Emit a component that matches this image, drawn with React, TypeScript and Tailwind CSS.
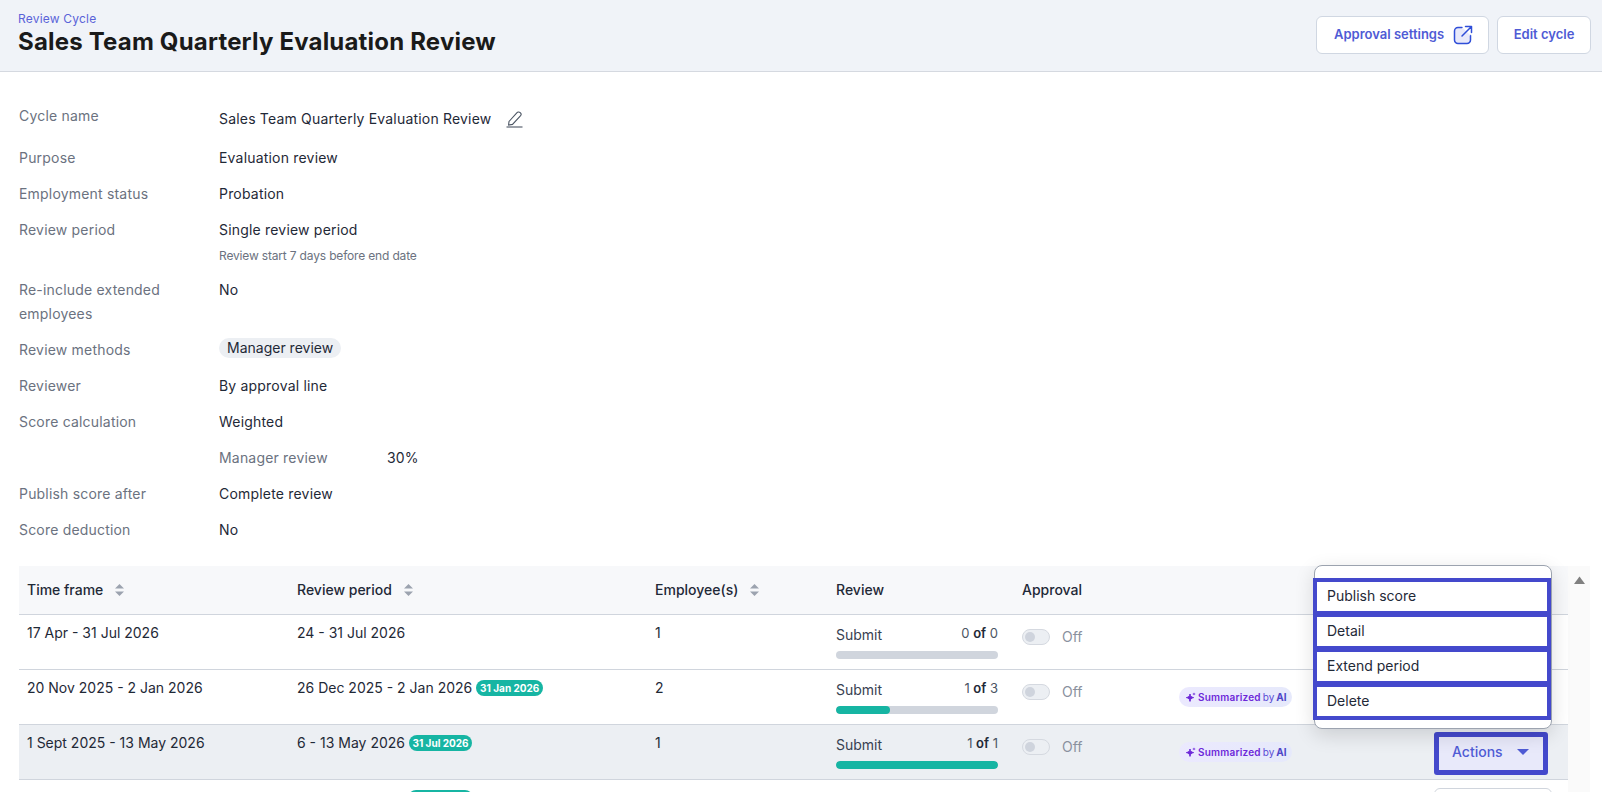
import React from "react";

const Sort = () => (
  <svg width="9" height="12" viewBox="0 0 9 12" className="ml-3 shrink-0">
    <path d="M4.5 0L9 4.5H0Z M4.5 12L0 7.5H9Z" fill="#9ca3af" />
  </svg>
);

const Sparkle = () => (
  <svg width="10" height="10" viewBox="0 0 10 10" className="shrink-0">
    <path d="M4 2C4.4 4.3 5.2 5.1 7.6 5.6C5.2 6.1 4.4 6.9 4 9.4C3.6 6.9 2.8 6.1 0.4 5.6C2.8 5.1 3.6 4.3 4 2Z" fill="#6d28d9" stroke="#6d28d9" strokeWidth="1" strokeLinejoin="round" />
    <path d="M8 0.2C8.2 1.3 8.6 1.7 9.8 1.9C8.6 2.1 8.2 2.5 8 3.6C7.8 2.5 7.4 2.1 6.2 1.9C7.4 1.7 7.8 1.3 8 0.2Z" fill="#6d28d9" />
  </svg>
);

const AiPill = () => (
  <div className="mt-[17px] h-5 w-[113px] flex items-center pl-[7px] gap-[2px] rounded-full bg-gradient-to-r from-[#ebe9fe] to-[#e6e9fb] text-[10px] leading-none whitespace-nowrap">
    <Sparkle />
    <span className="font-semibold tracking-[0.2px] text-[#6d28d9]">Summarized</span>
    <span className="text-[#5b4bd6]">by</span>
    <span className="font-bold text-[#4f46c8]">AI</span>
  </div>
);

const Badge = ({ children, w }: { children?: React.ReactNode; w: string }) => (
  <span className={`inline-flex h-4 items-center justify-center rounded-full bg-[#16b5a3] text-[10px] font-bold leading-none text-white ${w}`}>
    {children}
  </span>
);

const Toggle = () => (
  <div className="mt-3 flex items-center">
    <div className="h-4 w-7 rounded-full border border-[#d5d9e0] bg-[#eceff3] flex items-center pl-[2px]">
      <div className="h-[10px] w-[10px] rounded-full bg-[#cfd4dd]" />
    </div>
    <span className="ml-3 text-sm leading-5 text-[#8a919e]">Off</span>
  </div>
);

const Review = ({ a, b, pct }: { a: number; b: number; pct: number }) => (
  <div className="w-[162px] pt-[10px]">
    <div className="flex justify-between h-5 leading-5">
      <span className="text-sm text-[#374151]">Submit</span>
      <span className="text-[13px] leading-[17px] text-[#4b5563]">
        {a} <span className="font-semibold text-[#1f2937]">of</span> {b}
      </span>
    </div>
    <div className="mt-[6px] h-2 w-full overflow-hidden rounded-full bg-[#d0d5dd]">
      <div className="h-full rounded-full bg-[#16b5a3]" style={{ width: `${pct}%` }} />
    </div>
  </div>
);

const rowGrid = "grid grid-cols-[270px_358px_181px_186px_157px_1fr] h-[55px] border-b border-[#d0d5dd] text-sm text-[#1f2937]";

const Row = ({
  frame,
  period,
  badge,
  badgeW,
  emp,
  a,
  b,
  pct,
  ai,
  active,
}: {
  frame: string;
  period: string;
  badge?: string;
  badgeW?: string;
  emp: string;
  a: number;
  b: number;
  pct: number;
  ai?: boolean;
  active?: boolean;
}) => (
  <div className={`${rowGrid} ${active ? "bg-[#eceff3]" : "bg-white"}`}>
    <div className="pl-2 pt-2 leading-5">{frame}</div>
    <div className="pl-2 pt-2 leading-5 flex items-start gap-1">
      <span>{period}</span>
      {badge && <span className="mt-[2px] flex"><Badge w={badgeW ?? ""}>{badge}</Badge></span>}
    </div>
    <div className="pl-2 pt-2 leading-5">{emp}</div>
    <div className="pl-2"><Review a={a} b={b} pct={pct} /></div>
    <div className="pl-2"><Toggle /></div>
    <div className="pl-2 flex justify-between">
      {ai ? <AiPill /> : <span />}
      {active && (
        <button className="mt-[7px] mr-5 h-[43px] w-[114px] rounded-[3px] border-[5px] border-[#4449cc] bg-[#e8e9fa] flex items-center pl-[13px] pb-[3px] text-sm font-medium text-[#4f5bd5]">
          Actions
          <svg width="12" height="6" viewBox="0 0 12 6" className="ml-[14px]">
            <path d="M0 0H12L6 6Z" fill="#4f5bd5" />
          </svg>
        </button>
      )}
    </div>
  </div>
);

const Info = ({ label, children }: { label: string; children: React.ReactNode }) => (
  <div className="flex mb-3 text-sm leading-6 tracking-[0.19px]">
    <div className="w-[200px] pr-10 shrink-0 text-[#6b7280]">{label}</div>
    <div className="text-[#1f2937]">{children}</div>
  </div>
);

const menu = ["Publish score", "Detail", "Extend period", "Delete"];

export default function App() {
  return (
    <div className="h-[792px] overflow-hidden bg-white font-[Inter,sans-serif]">
      <header className="h-[72px] border-b border-[#d5d9e0] bg-[#f0f3f8] flex justify-between pl-[18px] pr-[11px]">
        <div>
          <div className="mt-[11px] text-xs leading-4 tracking-[0.2px] text-[#5a63d8]">Review Cycle</div>
          <h1 className="-mt-px text-2xl leading-8 font-bold tracking-[0.19px] text-[#1a1a1a]">Sales Team Quarterly Evaluation Review</h1>
        </div>
        <div className="flex gap-2 pt-4">
          <button className="h-[38px] w-[173px] rounded-md border border-[#d0d7e2] bg-white flex items-center pl-[17px] pb-px text-[13px] font-semibold text-[#4f5bd5]">
            Approval settings
            <svg width="20" height="20" viewBox="0 0 20 20" fill="none" className="ml-[9px]">
              <path d="M9 2.5H5A3.5 3.5 0 0 0 1.5 6V15A3.5 3.5 0 0 0 5 18.5H14A3.5 3.5 0 0 0 17.5 15V10.5" fill="#e8e9fa" stroke="#2f4ed8" strokeWidth="1.5" strokeLinecap="round" />
              <path d="M9 2.5V10.5H17.5Z" fill="#e8e9fa" />
              <path d="M9 11L18 2M12.5 1.5H18.5V7.5" stroke="#2f4ed8" strokeWidth="1.5" strokeLinecap="round" strokeLinejoin="round" />
            </svg>
          </button>
          <button className="h-[38px] w-[94px] rounded-md border border-[#d0d7e2] bg-white pb-px text-[13px] font-semibold text-[#4f5bd5]">
            Edit cycle
          </button>
        </div>
      </header>

      <main className="pt-8 pl-[19px] pr-3">
        <section className="pb-3">
          <div className="flex mb-3 h-[30px] text-sm tracking-[0.19px]">
            <div className="w-[200px] leading-6 text-[#6b7280]">Cycle name</div>
            <div className="flex items-start pt-[3px] leading-6 text-[#1f2937]">
              Sales Team Quarterly Evaluation Review
              <svg width="17" height="18" viewBox="0 0 17 18" fill="none" className="ml-[15px] mt-[3px]" stroke="#4b5563" strokeWidth="1.1">
                <path d="M3 11.5L10.8 2.8A2.4 2.4 0 0 1 14.4 6L6.5 14.4L2.6 15Z" />
                <path d="M0.5 17H16.5" />
              </svg>
            </div>
          </div>
          <Info label="Purpose">Evaluation review</Info>
          <Info label="Employment status">Probation</Info>
          <Info label="Review period">
            <div>Single review period</div>
            <div className="mt-[5px] text-xs leading-[18px] tracking-[-0.17px] text-[#6b7280]">Review start 7 days before end date</div>
            <div className="h-px" />
          </Info>
          <Info label="Re-include extended employees">No</Info>
          <Info label="Review methods">
            <span className="block h-5 rounded-full bg-[#eceff3] px-2 leading-5 tracking-normal">Manager review</span>
          </Info>
          <Info label="Reviewer">By approval line</Info>
          <Info label="Score calculation">Weighted</Info>
          <Info label="">
            <div className="flex">
              <span className="w-[168px] text-[#6b7280]">Manager review</span>
              <span>30%</span>
            </div>
          </Info>
          <Info label="Publish score after">Complete review</Info>
          <Info label="Score deduction">No</Info>
        </section>

        <section className="relative flex">
          <div className="flex-1">
            <div className="grid grid-cols-[270px_358px_181px_186px_157px_1fr] h-[49px] items-center border-b border-[#d0d5dd] bg-[#f7f8fa] text-sm font-medium text-[#1f2937]">
              <div className="pl-2 flex items-center">Time frame<Sort /></div>
              <div className="pl-2 flex items-center">Review period<Sort /></div>
              <div className="pl-2 flex items-center">Employee(s)<Sort /></div>
              <div className="pl-2">Review</div>
              <div className="pl-2">Approval</div>
              <div />
            </div>
            <Row frame="17 Apr - 31 Jul 2026" period="24 - 31 Jul 2026" emp="1" a={0} b={0} pct={0} />
            <Row frame="20 Nov 2025 - 2 Jan 2026" period="26 Dec 2025 - 2 Jan 2026" badge="31 Jan 2026" badgeW="w-[67px]" emp="2" a={1} b={3} pct={33.3} ai />
            <Row frame="1 Sept 2025 - 13 May 2026" period="6 - 13 May 2026" badge="31 Jul 2026" badgeW="w-[63px]" emp="1" a={1} b={1} pct={100} ai active />
            <div className="relative h-[55px]">
              <span className="absolute left-[389px] top-[10px] h-4 w-[65px] rounded-full bg-[#16b5a3]" />
              <span className="absolute right-4 top-2 h-[38px] w-[118px] rounded-md border border-[#d0d5dd] bg-white" />
            </div>
          </div>

          <div className="w-[22px] bg-[#fafafa] pt-[10px] flex justify-center items-start">
            <svg width="11" height="8" viewBox="0 0 11 8"><path d="M5.5 0.5L11 8H0Z" fill="#808080" /></svg>
          </div>

          <div className="absolute -top-px right-[38px] h-[164px] w-[238px] rounded-lg border border-[#9ca3af] bg-white pt-3 shadow-[0_6px_20px_rgba(0,0,0,0.14)]">
            <div className="-ml-[2px] w-[238px]">
              {menu.map((m, i) => (
                <div key={m} className={`h-[37px] border-4 border-[#4449cc] bg-white flex items-center pl-[10px] pb-px text-sm text-[#1f2937] ${i > 0 ? "-mt-[2px]" : ""}`}>
                  {m}
                </div>
              ))}
            </div>
          </div>
        </section>
      </main>
    </div>
  );
}
